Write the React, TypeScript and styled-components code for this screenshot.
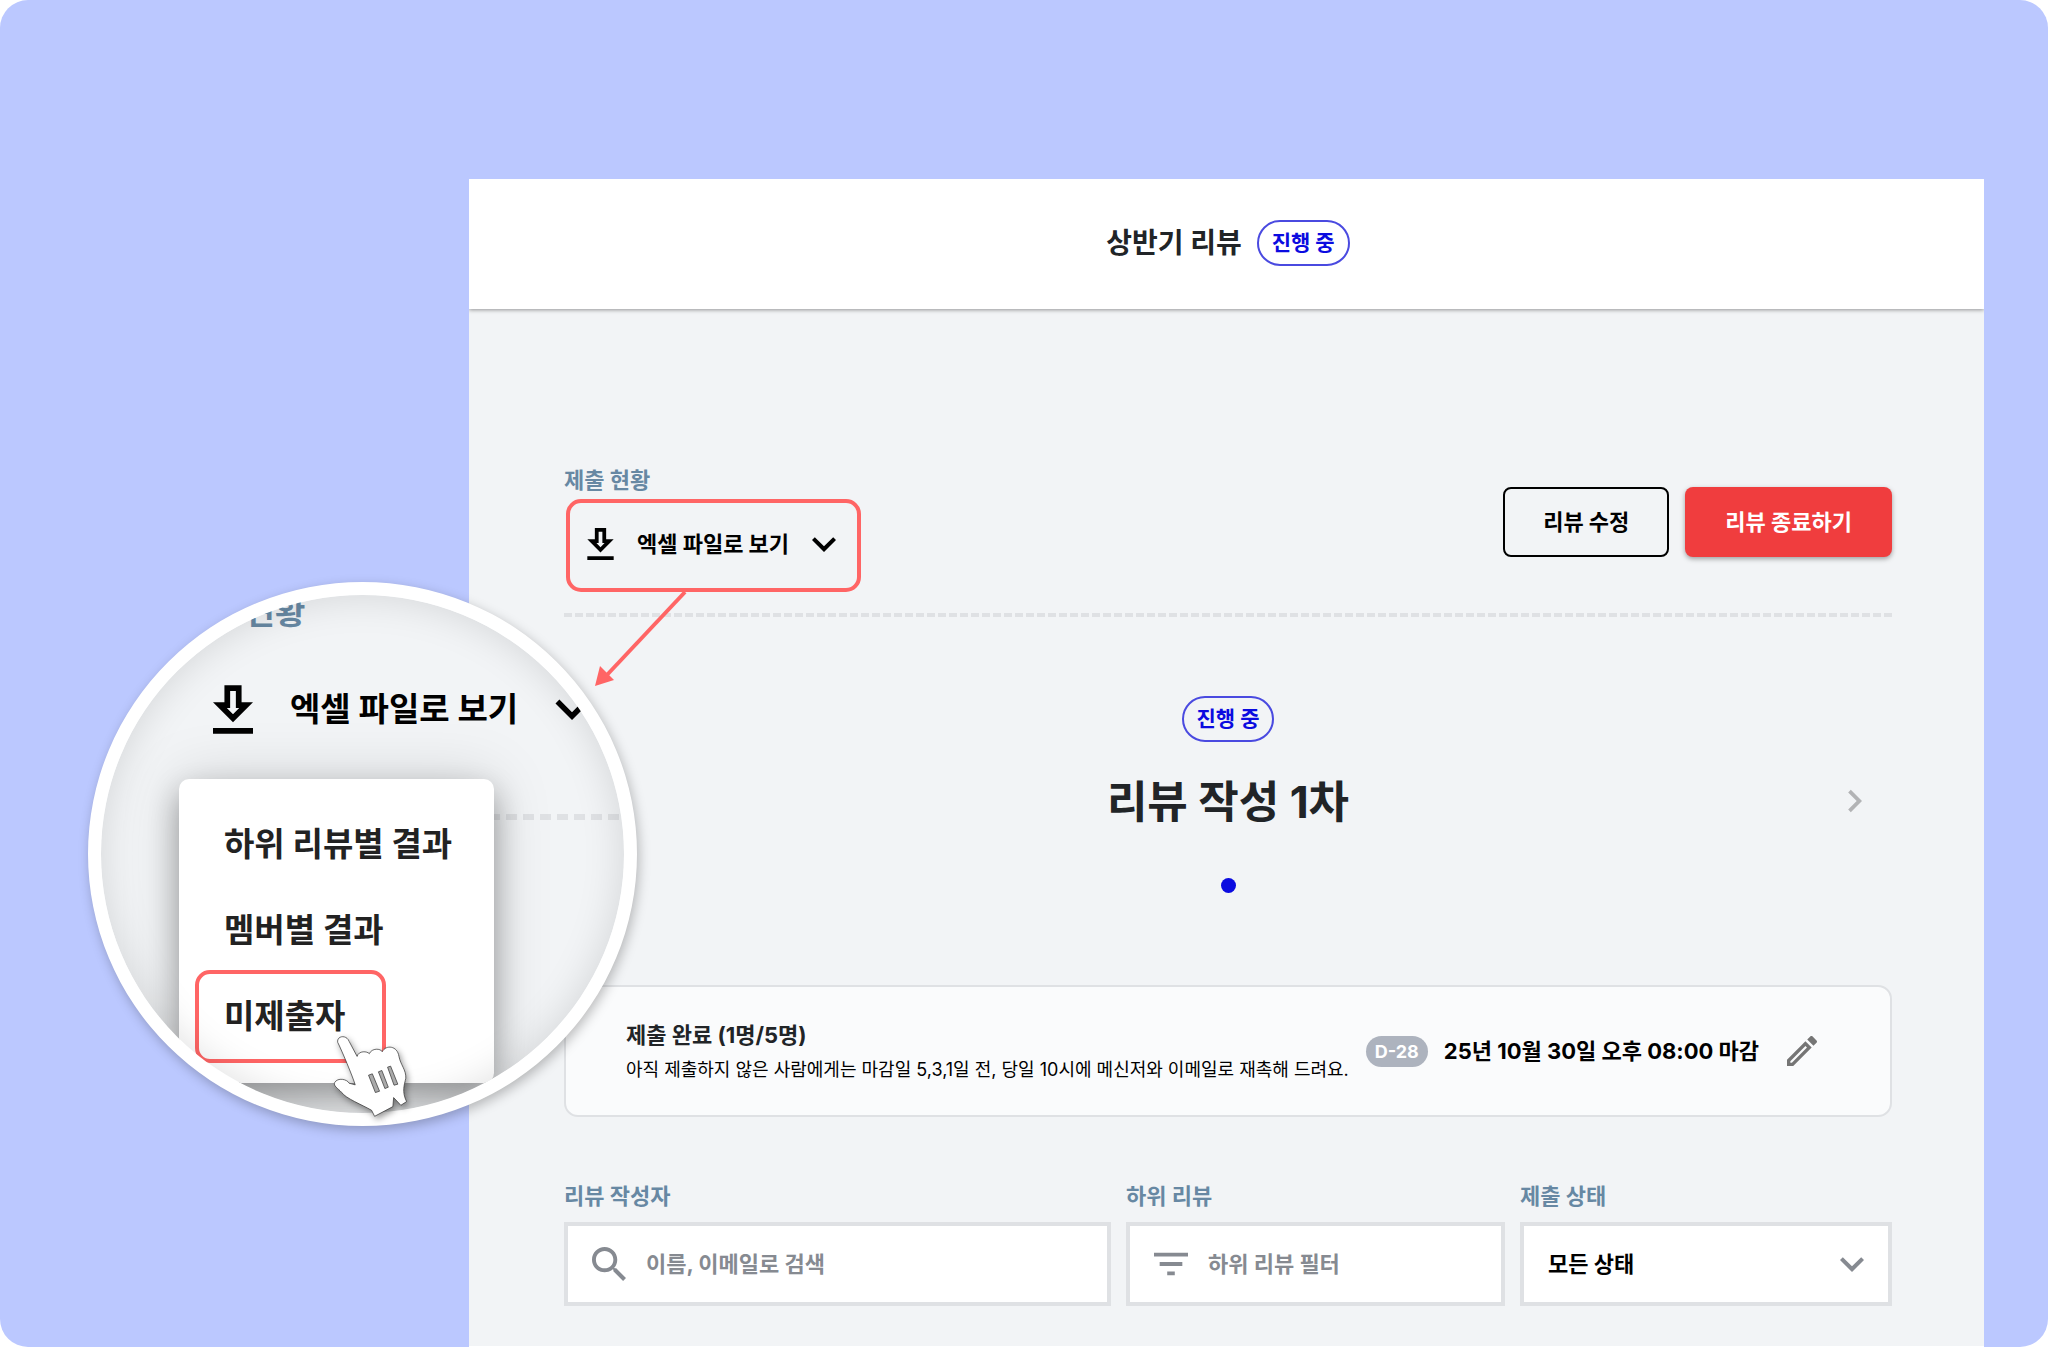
import React from "react";
import styled, { createGlobalStyle, css } from "styled-components";

const color = {
  canvas: "#bbc8ff",
  panel: "#f2f4f6",
  line: "#dfe1e4",
  label: "#6788a3",
  ink: "#212427",
  muted: "#868a91",
  primary: "#0b0be0",
  danger: "#f03d3e",
  mark: "#ff6565",
};

const GlobalStyle = createGlobalStyle`
  *, *::before, *::after { box-sizing: border-box; }
  body { margin: 0; background: #fff; }
  body, button, input, select {
    font-family: Inter, "Noto Sans CJK KR", sans-serif;
    font-weight: 700;
  }
  button { padding: 0; border: 0; background: none; cursor: pointer; }
  h1, h2, h3, p { margin: 0; }
  svg { display: block; flex: none; }
`;

const Canvas = styled.div`
  position: relative;
  display: flex;
  min-height: calc(100vh - 1px);
  padding: 179px 64px 0 469px;
  border-radius: 28px;
  background: ${color.canvas};
  overflow: hidden;
`;

const Panel = styled.main`
  flex: 1;
  min-width: 0;
  background: ${color.panel};
  border-bottom: 1px solid #fff;
  color: ${color.ink};
  overflow: hidden;
`;

const Header = styled.header`
  display: flex;
  align-items: center;
  justify-content: center;
  gap: 15px;
  height: 130px;
  padding: 0 92px 2px 95px;
  background: #fff;
  box-shadow: 0 1px 4px rgba(0, 0, 0, 0.4);
`;

const HeaderTitle = styled.h1`
  font-size: 28px;
  line-height: 40px;
`;

const Badge = styled.span`
  display: inline-flex;
  align-items: center;
  height: 46px;
  padding: 0 13px;
  border: 2px solid #4a4ae0;
  border-radius: 23px;
  color: ${color.primary};
  font-size: 21px;
  line-height: 32px;
`;

const Body = styled.div`
  padding: 155px 92px 40px 95px;
`;

const Toolbar = styled.section`
  display: flex;
  justify-content: space-between;
  align-items: flex-start;
`;

const SectionLabel = styled.h2`
  color: ${color.label};
  font-size: 22px;
  line-height: 32px;
`;

const marked = css`
  border: 4px solid ${color.mark};
  border-radius: 15px;
`;

const ExportButton = styled.button`
  ${marked}
  display: flex;
  align-items: center;
  gap: 23px;
  height: 93px;
  margin: 3px 0 0 2px;
  padding: 0 21px 4px 17px;
  color: #000;
  font-size: 22px;
  line-height: 32px;
`;

const Actions = styled.div`
  display: flex;
  gap: 16px;
  padding-top: 23px;
`;

const ActionButton = styled.button<{ $danger?: boolean }>`
  height: 70px;
  padding: 0 ${(p) => (p.$danger ? 40 : 38)}px;
  border: ${(p) => (p.$danger ? "0" : "2px solid #000")};
  border-radius: 8px;
  background: ${(p) => (p.$danger ? color.danger : "transparent")};
  box-shadow: ${(p) => (p.$danger ? "0 2px 5px rgba(0, 0, 0, 0.35)" : "none")};
  color: ${(p) => (p.$danger ? "#fff" : "#000")};
  font-size: 22px;
  line-height: 32px;
`;

const Divider = styled.hr`
  height: 4px;
  margin: 21px 0 0;
  border: 0;
  background: repeating-linear-gradient(90deg, ${color.line} 0 8px, transparent 8px 11px);
`;

const Stage = styled.section`
  display: grid;
  grid-template-columns: 1fr auto 1fr;
  justify-items: center;
  align-items: center;
  padding: 79px 0 92px;

  > * { grid-column: 2; }
`;

const StageTitle = styled.h2`
  margin-top: 30px;
  font-size: 44px;
  line-height: 60px;
`;

const NextButton = styled.button`
  && { grid-column: 3; }
  grid-row: 2;
  justify-self: end;
  margin: 27px 30px 0 0;
`;

const Dot = styled.span`
  width: 15px;
  height: 15px;
  margin-top: 46px;
  border-radius: 50%;
  background: ${color.primary};
`;

const StatusCard = styled.section`
  display: flex;
  align-items: center;
  justify-content: space-between;
  min-height: 132px;
  padding: 0 73px 0 60px;
  border: 2px solid ${color.line};
  border-radius: 14px;
  background: #fafbfc;
`;

const StatusText = styled.div`
  padding-top: 2px;
`;

const StatusTitle = styled.h3`
  font-size: 22px;
  line-height: 36px;
`;

const StatusNote = styled.p`
  color: #000;
  font-size: 18px;
  font-weight: 400;
  line-height: 34px;
`;

const Deadline = styled.div`
  display: flex;
  align-items: center;
  gap: 16px;
  color: #000;
  font-size: 22px;
  line-height: 32px;
  white-space: nowrap;
`;

const DayChip = styled.span`
  padding: 0 9px;
  border-radius: 16px;
  background: #adb3be;
  color: #fff;
  font-size: 18px;
  line-height: 31px;
`;

const EditButton = styled.button`
  margin-left: 12px;
`;

const Filters = styled.form`
  display: grid;
  grid-template-columns: minmax(0, 547fr) minmax(0, 379fr) minmax(0, 372fr);
  gap: 15px;
  margin-top: 63px;
`;

const FieldLabel = styled.label`
  display: block;
  margin-bottom: 10px;
  color: ${color.label};
  font-size: 22px;
  line-height: 32px;
`;

const FieldBox = styled.div`
  display: flex;
  align-items: center;
  gap: 20px;
  height: 84px;
  padding: 0 24px;
  border: 4px solid ${color.line};
  background: #fff;
  color: ${color.muted};
`;

const control = css`
  flex: 1;
  min-width: 0;
  height: 40px;
  padding: 0;
  border: 0;
  outline: 0;
  background: transparent;
  font-size: 22px;
  line-height: 32px;
`;

const TextInput = styled.input`
  ${control}
  &::placeholder { color: ${color.muted}; opacity: 1; }
`;

const Select = styled.select`
  ${control}
  appearance: none;
  color: #000;
`;

/* Annotations that lie over the panel */

const Arrow = styled.svg`
  position: absolute;
  left: 590px;
  top: 590px;
`;

const Lens = styled.aside`
  position: absolute;
  left: 88px;
  top: 582px;
  width: 549px;
  height: 544px;
  border: 13px solid #fff;
  border-radius: 50%;
  background: ${color.panel};
  box-shadow: 2px 4px 12px rgba(0, 0, 0, 0.25);
  overflow: hidden;

  &::after {
    content: "";
    position: absolute;
    inset: 0;
    border-radius: 50%;
    box-shadow: inset 0 0 40px rgba(0, 0, 0, 0.13);
    pointer-events: none;
  }
`;

const LensLabel = styled.div`
  padding-left: 75px;
  color: ${color.label};
  font-size: 33px;
  line-height: 34px;
`;

const LensTrigger = styled.button`
  display: flex;
  align-items: center;
  gap: 37px;
  height: 64px;
  margin: 48px 0 0 112px;
  color: #000;
  font-size: 33px;
  line-height: 48px;
  white-space: nowrap;
`;

const LensDivider = styled.div`
  position: absolute;
  left: 393px;
  right: 0;
  top: 219px;
  height: 6px;
  background: repeating-linear-gradient(90deg, ${color.line} 0 6px, transparent 6px 12px, ${color.line} 12px 17px);
`;

const Menu = styled.ul`
  position: relative;
  width: 315px;
  margin: 38px 0 0 78px;
  padding: 22px 0 24px;
  border-radius: 10px;
  background: #fff;
  box-shadow: 0 14px 30px rgba(0, 0, 0, 0.32), 0 0 60px rgba(0, 0, 0, 0.15);
  list-style: none;
`;

const MenuItem = styled.li<{ $marked?: boolean }>`
  position: relative;

  ${(p) =>
    p.$marked &&
    css`
      &::before {
        ${marked}
        content: "";
        position: absolute;
        left: 16px;
        top: -3px;
        width: 191px;
        height: 93px;
      }
    `}

  button {
    width: 100%;
    padding-left: 45px;
    color: #222;
    font-size: 33px;
    line-height: 86px;
    text-align: left;
  }
`;

const Hand = styled.svg`
  position: absolute;
  left: 332px;
  top: 1033px;
  overflow: visible;
  filter: drop-shadow(2px 3px 3px rgba(0, 0, 0, 0.4));
`;

type IconProps = { width: number; height: number };

const DownloadIcon = ({ width, height }: IconProps) => (
  <svg width={width} height={height} viewBox="5 3 14 17" fill="currentColor" aria-hidden="true">
    <path d="M19 9h-4V3H9v6H5l7 7 7-7zm-8 2V5h2v6h1.17L12 13.17 9.83 11H11zm-6 7h14v2H5z" />
  </svg>
);

const ChevronDown = ({ width, height }: IconProps) => (
  <svg width={width} height={height} viewBox="6 8 12 8" fill="currentColor" aria-hidden="true">
    <path d="M16.59 8.59 12 13.17 7.41 8.59 6 10l6 6 6-6z" />
  </svg>
);

const ChevronRight = () => (
  <svg width="14" height="24" viewBox="8.5 6 7.5 12" fill="#b2b3b5" aria-hidden="true">
    <path d="M10 6 8.59 7.41 13.17 12l-4.58 4.59L10 18l6-6z" />
  </svg>
);

const PencilIcon = () => (
  <svg width="30" height="30" viewBox="3 3 18 18" fill="#757575" aria-hidden="true">
    <path d="m14.06 9.02.92.92L5.92 19H5v-.92l9.06-9.06M17.66 3c-.25 0-.51.1-.7.29l-1.83 1.83 3.75 3.75 1.83-1.83c.39-.39.39-1.02 0-1.41l-2.34-2.34c-.2-.2-.45-.29-.71-.29zm-3.6 3.19L3 17.25V21h3.75L17.81 9.94l-3.75-3.75z" />
  </svg>
);

const SearchIcon = () => (
  <svg width="34" height="34" viewBox="3 3 17.5 17.5" fill="currentColor" aria-hidden="true">
    <path d="M15.5 14h-.79l-.28-.27C15.41 12.59 16 11.11 16 9.5 16 5.91 13.09 3 9.5 3S3 5.91 3 9.5 5.91 16 9.5 16c1.61 0 3.09-.59 4.23-1.57l.27.28v.79l5 4.99L20.49 19l-4.99-5zm-6 0C7.01 14 5 11.99 5 9.5S7.01 5 9.5 5 14 7.01 14 9.5 11.99 14 9.5 14z" />
  </svg>
);

const FilterIcon = () => (
  <svg width="34" height="24" viewBox="3 6 18 12" fill="currentColor" aria-hidden="true">
    <path d="M10 18h4v-2h-4v2zM3 6v2h18V6H3zm3 7h12v-2H6v2z" />
  </svg>
);

const menuItems = [
  { text: "하위 리뷰별 결과" },
  { text: "멤버별 결과" },
  { text: "미제출자", marked: true },
];

export default function App() {
  return (
    <>
      <GlobalStyle />
      <Canvas>
        <Panel>
          <Header>
            <HeaderTitle>상반기 리뷰</HeaderTitle>
            <Badge>진행 중</Badge>
          </Header>
          <Body>
            <Toolbar>
              <div>
                <SectionLabel>제출 현황</SectionLabel>
                <ExportButton type="button">
                  <DownloadIcon width={27} height={32} />
                  엑셀 파일로 보기
                  <ChevronDown width={24} height={16} />
                </ExportButton>
              </div>
              <Actions>
                <ActionButton type="button">리뷰 수정</ActionButton>
                <ActionButton type="button" $danger>
                  리뷰 종료하기
                </ActionButton>
              </Actions>
            </Toolbar>
            <Divider />
            <Stage>
              <Badge>진행 중</Badge>
              <StageTitle>리뷰 작성 1차</StageTitle>
              <NextButton type="button" aria-label="다음">
                <ChevronRight />
              </NextButton>
              <Dot />
            </Stage>
            <StatusCard>
              <StatusText>
                <StatusTitle>제출 완료 (1명/5명)</StatusTitle>
                <StatusNote>
                  아직 제출하지 않은 사람에게는 마감일 5,3,1일 전, 당일 10시에 메신저와 이메일로 재촉해 드려요.
                </StatusNote>
              </StatusText>
              <Deadline>
                <DayChip>D-28</DayChip>
                <span>25년 10월 30일 오후 08:00 마감</span>
                <EditButton type="button" aria-label="마감일 수정">
                  <PencilIcon />
                </EditButton>
              </Deadline>
            </StatusCard>
            <Filters>
              <div>
                <FieldLabel htmlFor="writer">리뷰 작성자</FieldLabel>
                <FieldBox>
                  <SearchIcon />
                  <TextInput id="writer" placeholder="이름, 이메일로 검색" />
                </FieldBox>
              </div>
              <div>
                <FieldLabel htmlFor="sub-review">하위 리뷰</FieldLabel>
                <FieldBox>
                  <FilterIcon />
                  <TextInput id="sub-review" placeholder="하위 리뷰 필터" />
                </FieldBox>
              </div>
              <div>
                <FieldLabel htmlFor="status">제출 상태</FieldLabel>
                <FieldBox>
                  <Select id="status">
                    <option>모든 상태</option>
                  </Select>
                  <ChevronDown width={24} height={16} />
                </FieldBox>
              </div>
            </Filters>
          </Body>
        </Panel>

        <Arrow width="100" height="100" viewBox="0 0 100 100" aria-hidden="true">
          <path d="M95 2 16 86" stroke={color.mark} strokeWidth="4" />
          <path d="M5 96 10 76 24 90z" fill={color.mark} />
        </Arrow>

        <Lens>
          <LensDivider />
          <LensLabel>제출 현황</LensLabel>
          <LensTrigger type="button">
            <DownloadIcon width={40} height={49} />
            엑셀 파일로 보기
            <ChevronDown width={34} height={22} />
          </LensTrigger>
          <Menu>
            {menuItems.map((item) => (
              <MenuItem key={item.text} $marked={item.marked}>
                <button type="button">{item.text}</button>
              </MenuItem>
            ))}
          </Menu>
        </Lens>

        <Hand width="78" height="87" viewBox="710 580 205 260" preserveAspectRatio="none" aria-hidden="true">
          <path
            d="M771 735C765 712 735 630 725 608C722 588 748 584 755 605L776 650C780 632 803 634 808 642C815 624 838 626 842 636C852 614 882 618 886 650C890 675 905 690 904 715C900 735 893 755 906 785L891 796L872 773L870 800L822 829L814 811C790 795 745 775 735 757C725 745 713 738 717 728C725 712 750 718 755 730Z"
            fill="#fff"
            stroke="#333"
            strokeWidth="2"
            strokeLinejoin="round"
          />
          <path
            d="M806 706l10-4 19 52-11 4zM832 696l9-4 17 50-9 4zM856 682l8-3 19 54-10 3z"
            fill="#aaa"
            stroke="#333"
            strokeWidth="2"
          />
        </Hand>
      </Canvas>
    </>
  );
}
